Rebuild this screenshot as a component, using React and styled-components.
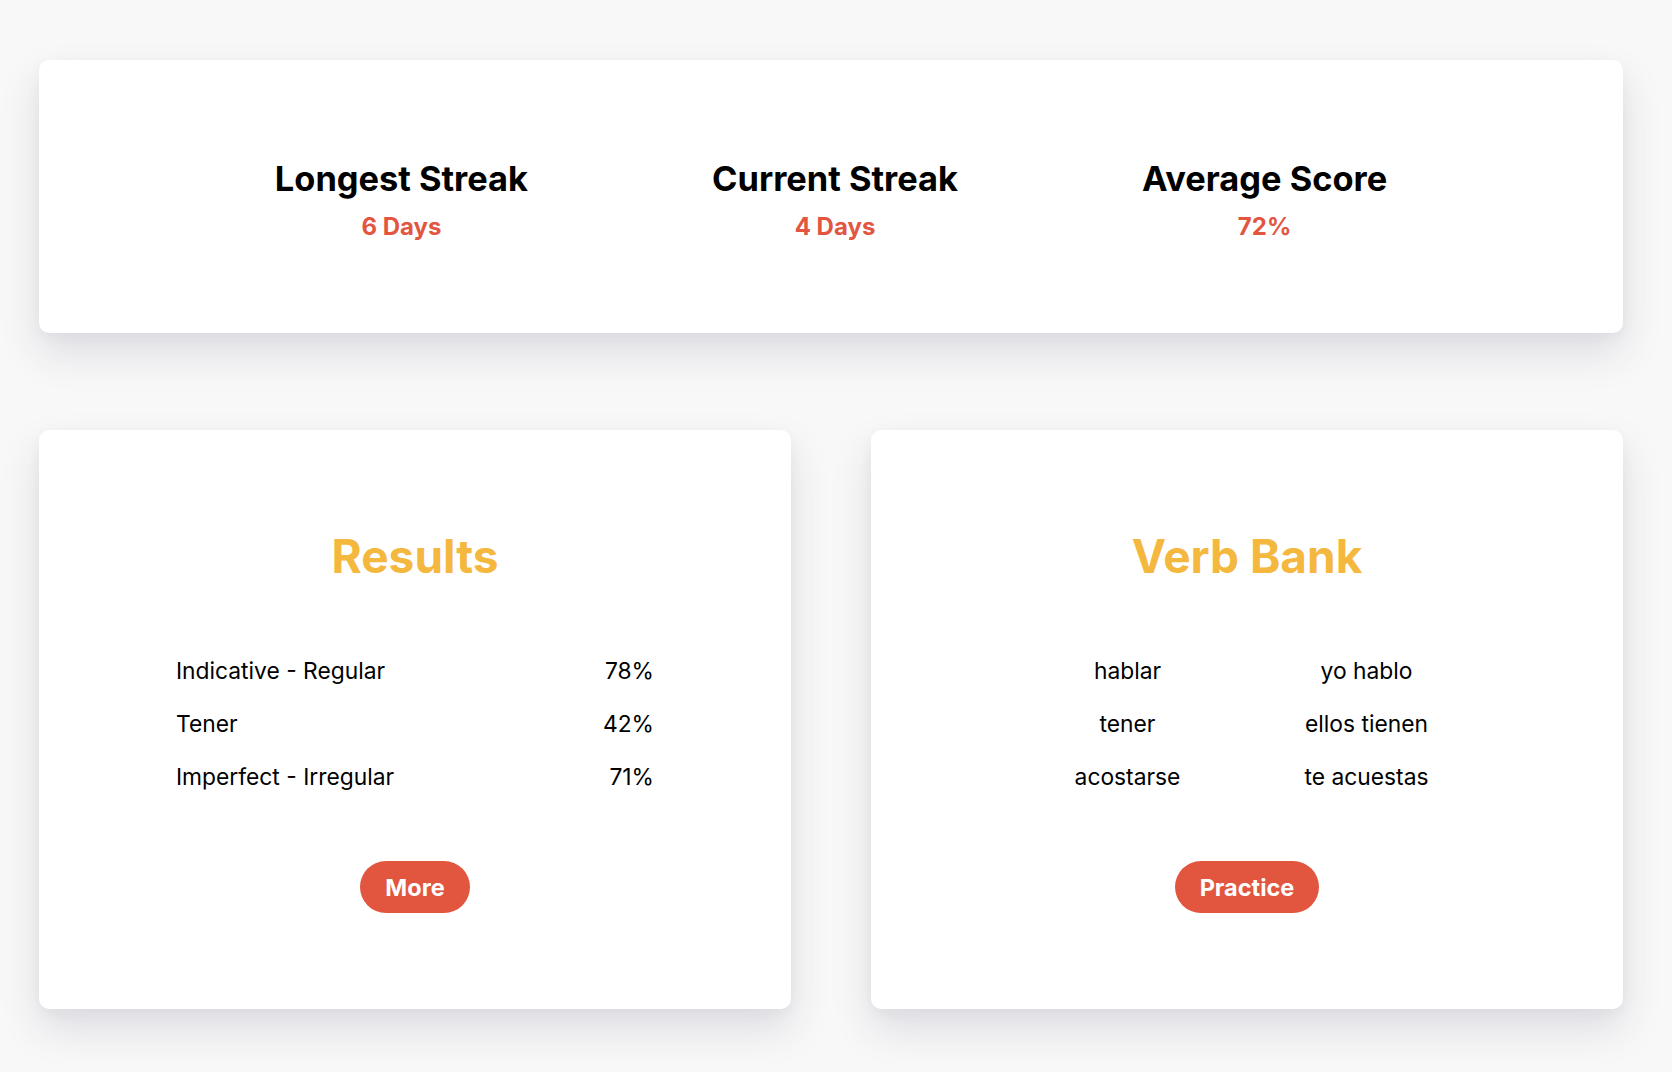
import React from "react";
import styled, { createGlobalStyle } from "styled-components";

const red = "#e2553f";
const amber = "#f5b83f";
const pageBg = "#f8f8f8";

const GlobalStyle = createGlobalStyle`
  body {
    margin: 0;
    background: ${pageBg};
    font-family: Inter, "Noto Sans", sans-serif;
    color: #000;
  }
`;

const Page = styled.div`
  width: 1584px;
  margin-left: 39px;
  padding: 60px 0 63px;
  display: flex;
  flex-direction: column;
  gap: 97px;
`;

const Card = styled.div`
  background: #fff;
  border-radius: 10px;
  box-shadow: 0 20px 40px rgba(50, 50, 93, 0.13), 0 4px 14px rgba(0, 0, 0, 0.04);
`;

const StatsCard = styled(Card)`
  height: 273px;
  box-sizing: border-box;
  padding-top: 7px;
  display: flex;
  align-items: center;
  justify-content: center;
  gap: 184px;
`;

const Stat = styled.div`
  display: flex;
  flex-direction: column;
  align-items: center;
`;

const StatLabel = styled.h2`
  margin: 0;
  font-size: 34.4px;
  line-height: 40px;
  font-weight: 700;
`;

const StatValue = styled.div`
  margin-top: 13px;
  font-size: 24px;
  line-height: 30px;
  font-weight: 700;
  color: ${red};
`;

const Grid = styled.div`
  display: grid;
  grid-template-columns: 1fr 1fr;
  gap: 80px;
`;

const Panel = styled(Card)`
  height: 579px;
  box-sizing: border-box;
  padding-top: 98px;
  display: flex;
  flex-direction: column;
  align-items: center;
`;

const PanelTitle = styled.h1`
  margin: 0;
  font-size: 46px;
  line-height: 56px;
  font-weight: 700;
  color: ${amber};
`;

const Table = styled.table`
  margin-top: 60px;
  width: 478px;
  border-collapse: collapse;
  table-layout: fixed;
`;

const Cell = styled.td`
  padding: 0;
  height: 53px;
  font-size: 22.8px;
  line-height: 53px;
  font-weight: 400;
  text-align: ${(p) => p.$align || "left"};
`;

const Button = styled.button`
  margin-top: 58px;
  height: 52px;
  padding: 0 25px;
  border: none;
  border-radius: 26px;
  background: ${red};
  color: #fff;
  font-family: inherit;
  font-size: 23.5px;
  font-weight: 700;
  cursor: pointer;
`;

const stats = [
  { label: "Longest Streak", value: "6 Days" },
  { label: "Current Streak", value: "4 Days" },
  { label: "Average Score", value: "72%" },
];

const results = [
  ["Indicative - Regular", "78%"],
  ["Tener", "42%"],
  ["Imperfect - Irregular", "71%"],
];

const verbs = [
  ["hablar", "yo hablo"],
  ["tener", "ellos tienen"],
  ["acostarse", "te acuestas"],
];

export default function App() {
  return (
    <>
      <GlobalStyle />
      <Page>
        <StatsCard>
          {stats.map((s) => (
            <Stat key={s.label}>
              <StatLabel>{s.label}</StatLabel>
              <StatValue>{s.value}</StatValue>
            </Stat>
          ))}
        </StatsCard>
        <Grid>
          <Panel>
            <PanelTitle>Results</PanelTitle>
            <Table>
              <tbody>
                {results.map(([name, score]) => (
                  <tr key={name}>
                    <Cell>{name}</Cell>
                    <Cell $align="right">{score}</Cell>
                  </tr>
                ))}
              </tbody>
            </Table>
            <Button>More</Button>
          </Panel>
          <Panel>
            <PanelTitle>Verb Bank</PanelTitle>
            <Table>
              <tbody>
                {verbs.map(([inf, conj]) => (
                  <tr key={inf}>
                    <Cell $align="center">{inf}</Cell>
                    <Cell $align="center">{conj}</Cell>
                  </tr>
                ))}
              </tbody>
            </Table>
            <Button>Practice</Button>
          </Panel>
        </Grid>
      </Page>
    </>
  );
}
